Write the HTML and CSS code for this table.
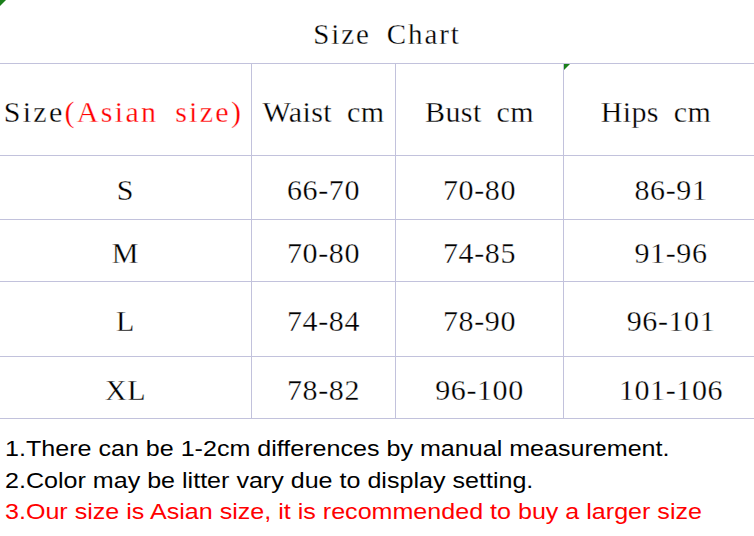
FILE: index.html
```html
<!DOCTYPE html>
<html>
<head>
<meta charset="utf-8">
<link rel="stylesheet" href="styles.css">
</head>
<body>
<div class="sheet">
  <span class="mark mark-top"></span>
  <div class="title">Size Chart</div>
  <div class="table">
    <div class="cell head first">Size<span class="red">(Asian size)</span></div>
    <div class="cell head">Waist cm</div>
    <div class="cell head">Bust cm</div>
    <div class="cell head last">Hips cm<span class="mark mark-cell"></span></div>

    <div class="cell">S</div>
    <div class="cell">66-70</div>
    <div class="cell">70-80</div>
    <div class="cell last num">86-91</div>

    <div class="cell">M</div>
    <div class="cell">70-80</div>
    <div class="cell">74-85</div>
    <div class="cell last num">91-96</div>

    <div class="cell">L</div>
    <div class="cell">74-84</div>
    <div class="cell">78-90</div>
    <div class="cell last num">96-101</div>

    <div class="cell">XL</div>
    <div class="cell">78-82</div>
    <div class="cell">96-100</div>
    <div class="cell last num">101-106</div>
  </div>
  <div class="notes">
    <p>1.There can be 1-2cm differences by manual measurement.</p>
    <p>2.Color may be litter vary due to display setting.</p>
    <p class="red">3.Our size is Asian size, it is recommended to buy a larger size</p>
  </div>
</div>
</body>
</html>
```
FILE: styles.css
```css
html, body {
  margin: 0;
  padding: 0;
  background: #ffffff;
}
.sheet {
  position: relative;
  width: 754px;
  height: 536px;
  overflow: hidden;
  font-family: "Liberation Serif", "Noto Sans CJK SC", serif;
  color: #000;
  -webkit-text-stroke: 0.3px #ffffff;
}
.title {
  height: 63px;
  display: flex;
  align-items: center;
  justify-content: center;
  font-size: 29px;
  padding-left: 20px;
  box-sizing: border-box;
  padding-top: 5px;
  word-spacing: 7px;
  letter-spacing: 1.9px;
}
.table {
  display: grid;
  grid-template-columns: 251px 144px 168px 191px;
  grid-template-rows: 92px 64px 62px 75px 62px;
  border-bottom: 1px solid #c2c2dc;
}
.cell {
  position: relative;
  display: flex;
  align-items: center;
  justify-content: center;
  font-size: 30px;
  border-top: 1px solid #c2c2dc;
  box-sizing: border-box;
  white-space: nowrap;
  padding-top: 4px;
  letter-spacing: 0.6px;
}
.cell:not(:nth-child(4n+1)) {
  border-left: 1px solid #c2c2dc;
}
.cell.head {
  padding-top: 4px;
  word-spacing: 7px;
  letter-spacing: 0.4px;
}
.cell.head.first {
  letter-spacing: 2.3px;
  padding-right: 4px;
}
.cell.last {
  padding-right: 6px;
}
.cell.num {
  padding-left: 24px;
  padding-right: 0;
}
.red {
  color: #ff0000;
}
.notes {
  padding: 14px 0 0 5px;
  font-family: "Liberation Sans", Arial, sans-serif;
  font-size: 22px;
  -webkit-text-stroke: 0;
}
.notes p {
  margin: 0;
  line-height: 31.5px;
  white-space: nowrap;
  transform: scaleX(1.14);
  transform-origin: left center;
}
.mark {
  position: absolute;
  width: 0;
  height: 0;
  border-top: 6px solid #1a7f1a;
  border-right: 6px solid transparent;
  -webkit-text-stroke: 0;
}
.mark-top {
  left: 0;
  top: 0;
}
.mark-cell {
  left: 0;
  top: 0;
}
```
